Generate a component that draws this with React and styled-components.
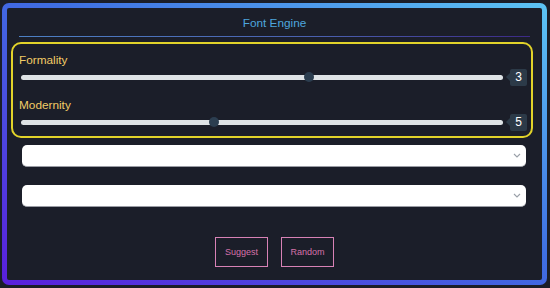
import React from "react";
import styled, { createGlobalStyle } from "styled-components";

const sliders = [
  { label: "Formality", value: 3, pos: 0.597 },
  { label: "Modernity", value: 5, pos: 0.4 },
];

const App = () => {
  return (
    <>
      <GlobalStyle />
      <Page>
        <Frame>
          <Title>Font Engine</Title>
          <Rule />
          <SliderBox>
            {sliders.map((s) => (
              <SliderGroup key={s.label}>
                <Label>{s.label}</Label>
                <SliderRow>
                  <Track>
                    <Thumb style={{ left: `${s.pos * 100}%` }} />
                  </Track>
                  <Badge>{s.value}</Badge>
                </SliderRow>
              </SliderGroup>
            ))}
          </SliderBox>
          <Select>
            <Chevron />
          </Select>
          <Select second>
            <Chevron />
          </Select>
          <Actions>
            <Button>Suggest</Button>
            <Button>Random</Button>
          </Actions>
        </Frame>
      </Page>
    </>
  );
};

const Chevron = () => (
  <svg width="8" height="5" viewBox="0 0 8 5">
    <polyline
      points="1,1 4,4 7,1"
      fill="none"
      stroke="#9aa0a8"
      strokeWidth="1.1"
    />
  </svg>
);

const GlobalStyle = createGlobalStyle`
  html, body {
    margin: 0;
    background: #1b1e28;
  }
  body {
    font-family: "Liberation Sans", Arial, sans-serif;
  }
`;

const Page = styled.div`
  width: 550px;
  height: 288px;
  padding: 3px 3px 3px 2px;
  box-sizing: border-box;
`;

const Frame = styled.div`
  height: 282px;
  box-sizing: border-box;
  border: 5px solid transparent;
  border-radius: 7px;
  background: linear-gradient(#1b1e29, #1b1e29) padding-box,
    linear-gradient(to bottom left, #5cc4f4 0%, #3f6fe2 45%, #5a1fdc 100%)
      border-box;
  display: flex;
  flex-direction: column;
`;

const Title = styled.div`
  margin-top: 7px;
  text-align: center;
  color: #4ea6de;
  font-size: 11.8px;
  line-height: 16px;
`;

const Rule = styled.div`
  height: 1px;
  margin: 5px 12px 0 12px;
  background: linear-gradient(to right, #4d80c4, #4a5fae 60%, #3c2a86);
`;

const SliderBox = styled.div`
  margin: 5px 9px 0 4px;
  border: 2px solid #e2d32a;
  border-radius: 10px;
  padding: 9px 4px 5px 8px;
  display: flex;
  flex-direction: column;
  gap: 12px;
`;

const SliderGroup = styled.div`
  display: flex;
  flex-direction: column;
`;

const Label = styled.div`
  margin-left: -2px;
  color: #f2cc66;
  font-size: 11.8px;
  line-height: 15px;
`;

const SliderRow = styled.div`
  display: flex;
  align-items: center;
  height: 18px;
`;

const Track = styled.div`
  position: relative;
  flex: 1;
  height: 5px;
  border-radius: 3px;
  background: #dfe3e6;
`;

const Thumb = styled.div`
  position: absolute;
  top: 50%;
  width: 10px;
  height: 10px;
  border-radius: 50%;
  background: #2c3e50;
  transform: translate(-50%, -50%);
`;

const Badge = styled.div`
  position: relative;
  margin-left: 7px;
  width: 17px;
  height: 17px;
  border-radius: 2px;
  background: #2c3a48;
  color: #ffffff;
  font-size: 12px;
  display: flex;
  align-items: center;
  justify-content: center;

  &::before {
    content: "";
    position: absolute;
    left: -4px;
    top: 50%;
    transform: translateY(-50%);
    border-top: 4px solid transparent;
    border-bottom: 4px solid transparent;
    border-right: 4px solid #2c3a48;
  }
`;

const Select = styled.div`
  margin: ${(props) => (props.second ? "18px" : "7px")} 16px 0 15px;
  height: 22px;
  box-sizing: border-box;
  background: #ffffff;
  border-radius: 5px;
  border-bottom: 1px solid #9a9ca4;
  display: flex;
  align-items: center;
  justify-content: flex-end;
  padding-right: 5px;
`;

const Actions = styled.div`
  margin-top: 30px;
  display: flex;
  justify-content: center;
  gap: 13px;
`;

const Button = styled.button`
  width: 53px;
  height: 30px;
  padding: 0;
  background: transparent;
  border: 1px solid #d882b6;
  color: #d672aa;
  font-family: "Liberation Sans", Arial, sans-serif;
  font-size: 9px;
  cursor: pointer;
`;

export default App;
